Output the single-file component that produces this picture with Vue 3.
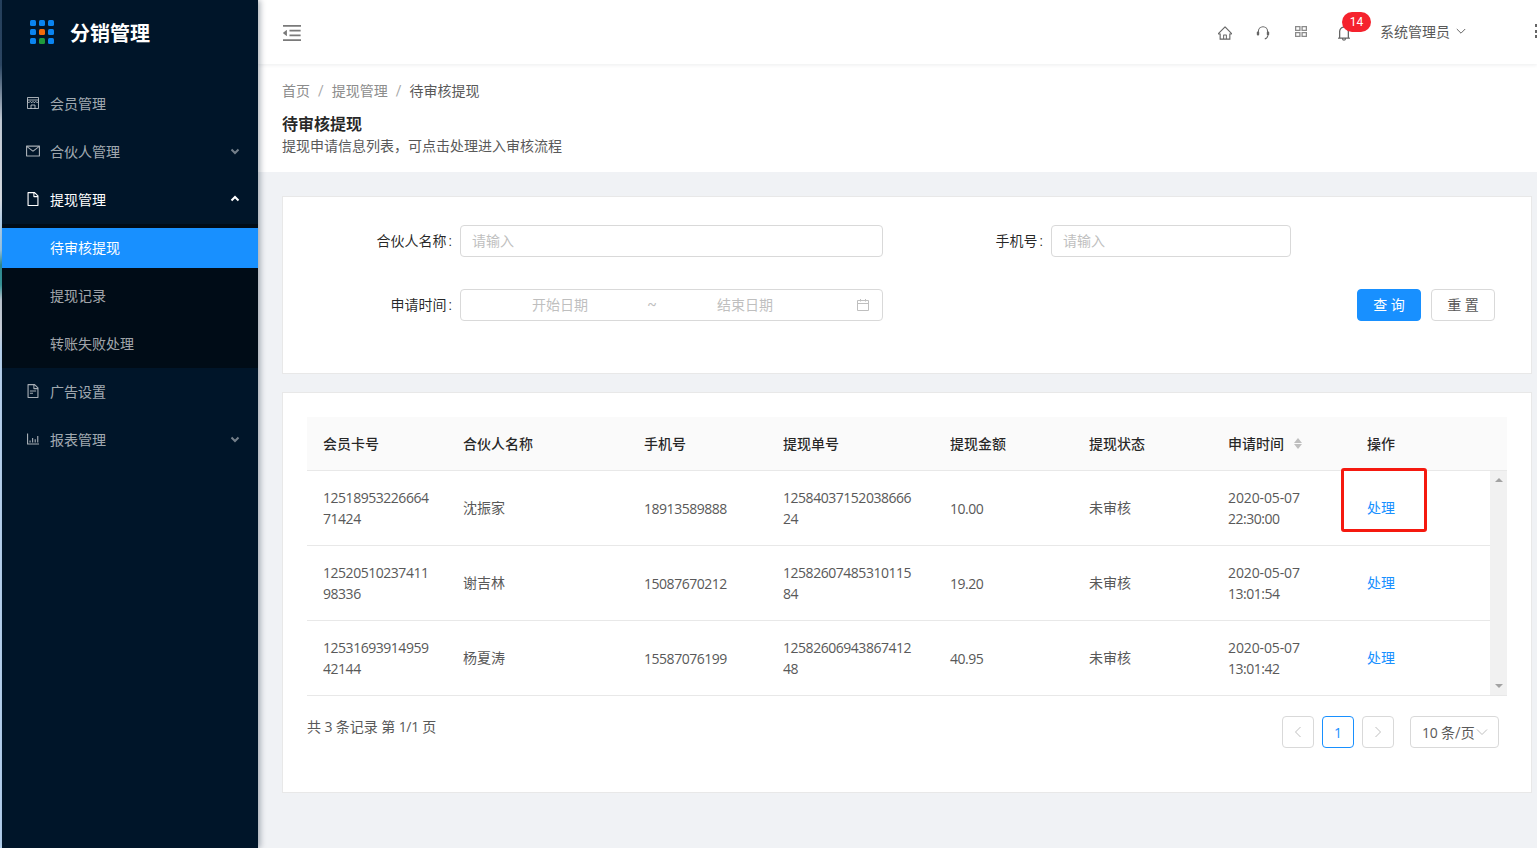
<script setup>
const subMenu = [
  { label: '待审核提现', active: true },
  { label: '提现记录' },
  { label: '转账失败处理' }
]

const rows = [
  { card: '1251895322666471424', name: '沈振家', phone: '18913589888', no: '1258403715203866624', amount: '10.00', status: '未审核', date: '2020-05-07', time: '22:30:00', marked: true },
  { card: '1252051023741198336', name: '谢吉林', phone: '15087670212', no: '1258260748531011584', amount: '19.20', status: '未审核', date: '2020-05-07', time: '13:01:54' },
  { card: '1253169391495942144', name: '杨夏涛', phone: '15587076199', no: '1258260694386741248', amount: '40.95', status: '未审核', date: '2020-05-07', time: '13:01:42' }
]

const columns = ['会员卡号', '合伙人名称', '手机号', '提现单号', '提现金额', '提现状态', '申请时间', '操作']
const logoDots = ['b', 'b', 'b', 'b', 'o', 'b', 'b', 'g', 'b']
</script>

<template>
  <div class="layout">
    <aside class="sider">
      <div class="logo">
        <div class="logo-mark">
          <i v-for="(d, i) in logoDots" :key="i" :class="['dot', d]"></i>
        </div>
        <span class="logo-text">分销管理</span>
      </div>

      <nav class="menu">
        <div class="menu-item">
          <svg class="mi" viewBox="0 0 14 14" fill="none" stroke="currentColor" stroke-width="1">
            <path d="M1.5 1.5h11v11h-11zM1.5 4h11M1.5 5.5c.8 1.3 2 1.3 2.8 0 .8 1.3 2 1.3 2.7 0 .8 1.3 2 1.3 2.7 0 .8 1.3 2 1.3 2.8 0M5 12.5V9h4v3.5" />
          </svg>
          <span>会员管理</span>
        </div>
        <div class="menu-item">
          <svg class="mi" viewBox="64 64 896 896" fill="currentColor"><path d="M928 160H96c-17.7 0-32 14.3-32 32v640c0 17.7 14.3 32 32 32h832c17.7 0 32-14.3 32-32V192c0-17.7-14.3-32-32-32zm-40 110.8V792H136V270.8l-27.6-21.5 39.3-50.5 42.8 33.3h643.1l42.8-33.3 39.3 50.5-27.7 21.5zM833.6 232L512 482 190.4 232l-42.8-33.3-39.3 50.5 27.6 21.5 341.6 265.6a55.99 55.99 0 0 0 68.7 0L888 270.8l27.6-21.5-39.3-50.5-42.7 33.2z" /></svg>
          <span>合伙人管理</span>
          <svg class="arrow" viewBox="0 0 10 10" fill="none" stroke="currentColor" stroke-width="2"><path d="M1.5 3.5 5 7l3.5-3.5" /></svg>
        </div>
        <div class="menu-item open">
          <svg class="mi" viewBox="64 64 896 896" fill="currentColor"><path d="M854.6 288.6L639.4 73.4c-6-6-14.1-9.4-22.6-9.4H192c-17.7 0-32 14.3-32 32v832c0 17.7 14.3 32 32 32h640c17.7 0 32-14.3 32-32V311.3c0-8.5-3.4-16.7-9.4-22.7zM790.2 326H602V137.8L790.2 326zm1.8 562H232V136h302v216a42 42 0 0 0 42 42h216v494z" /></svg>
          <span>提现管理</span>
          <svg class="arrow" viewBox="0 0 10 10" fill="none" stroke="currentColor" stroke-width="2"><path d="M1.5 6.5 5 3l3.5 3.5" /></svg>
        </div>
        <div class="submenu">
          <div v-for="s in subMenu" :key="s.label" :class="['sub-item', { active: s.active }]">{{ s.label }}</div>
        </div>
        <div class="menu-item">
          <svg class="mi" viewBox="64 64 896 896" fill="currentColor"><path d="M854.6 288.6L639.4 73.4c-6-6-14.1-9.4-22.6-9.4H192c-17.7 0-32 14.3-32 32v832c0 17.7 14.3 32 32 32h640c17.7 0 32-14.3 32-32V311.3c0-8.5-3.4-16.7-9.4-22.7zM790.2 326H602V137.8L790.2 326zm1.8 562H232V136h302v216a42 42 0 0 0 42 42h216v494zM504 618H320c-4.4 0-8 3.6-8 8v48c0 4.4 3.6 8 8 8h184c4.4 0 8-3.6 8-8v-48c0-4.4-3.6-8-8-8zM312 490v48c0 4.4 3.6 8 8 8h384c4.4 0 8-3.6 8-8v-48c0-4.4-3.6-8-8-8H320c-4.4 0-8 3.6-8 8z" /></svg>
          <span>广告设置</span>
        </div>
        <div class="menu-item">
          <svg class="mi" viewBox="64 64 896 896" fill="currentColor"><path d="M888 792H200V168c0-4.4-3.6-8-8-8h-56c-4.4 0-8 3.6-8 8v688c0 4.4 3.6 8 8 8h752c4.4 0 8-3.6 8-8v-56c0-4.4-3.6-8-8-8zM288 604h72v132h-72zM452 440h72v296h-72zM616 520h72v216h-72zM780 320h72v416h-72z" /></svg>
          <span>报表管理</span>
          <svg class="arrow" viewBox="0 0 10 10" fill="none" stroke="currentColor" stroke-width="2"><path d="M1.5 3.5 5 7l3.5-3.5" /></svg>
        </div>
      </nav>
    </aside>

    <div class="main">
      <header class="topbar">
        <svg class="fold" viewBox="112 160 800 704" fill="currentColor" preserveAspectRatio="none"><path d="M408 442h480c4.4 0 8-3.6 8-8v-56c0-4.4-3.6-8-8-8H408c-4.4 0-8 3.6-8 8v56c0 4.4 3.6 8 8 8zm-8 204c0 4.4 3.6 8 8 8h480c4.4 0 8-3.6 8-8v-56c0-4.4-3.6-8-8-8H408c-4.4 0-8 3.6-8 8v56zm504-486H120c-4.4 0-8 3.6-8 8v56c0 4.4 3.6 8 8 8h784c4.4 0 8-3.6 8-8v-56c0-4.4-3.6-8-8-8zm0 632H120c-4.4 0-8 3.6-8 8v56c0 4.4 3.6 8 8 8h784c4.4 0 8-3.6 8-8v-56c0-4.4-3.6-8-8-8zM115.4 518.9L271.7 642c5.8 4.6 14.4.5 14.4-6.9V388.9c0-7.4-8.5-11.5-14.4-6.9L115.4 505.1a8.74 8.74 0 0 0 0 13.8z" /></svg>
        <div class="top-right">
          <span class="tool">
            <svg viewBox="64 64 896 896" fill="currentColor"><path d="M946.5 505L560.1 118.8l-25.9-25.9a31.5 31.5 0 0 0-44.4 0L77.5 505a63.9 63.9 0 0 0-18.8 46c.4 35.2 29.7 63.3 64.9 63.3h42.5V940h691.8V614.3h43.4c17.1 0 33.2-6.7 45.3-18.8a63.6 63.6 0 0 0 18.7-45.3c0-17-6.7-33.1-18.8-45.2zM568 868H456V664h112v204zm217.9-325.7V868H632V640c0-22.1-17.9-40-40-40H432c-22.1 0-40 17.9-40 40v228H238.1V542.3h-96l370-369.7 23.1 23.1L882 542.3h-96.1z" /></svg>
          </span>
          <span class="tool">
            <svg viewBox="0 0 14 14" fill="none" stroke="currentColor" stroke-width="1.1"><path d="M2.4 6V5.4a4.6 4.6 0 0 1 9.2 0V6" /><path d="M11.8 9.5c-.2 1.8-1.2 3-3 3.4" /><rect x=".8" y="5.4" width="2.4" height="4.2" rx="1.1" fill="currentColor" stroke="none" /><rect x="10.8" y="5.4" width="2.4" height="4.2" rx="1.1" fill="currentColor" stroke="none" /></svg>
          </span>
          <span class="tool">
            <svg class="apps" viewBox="0 0 12 11" fill="none" stroke="currentColor" stroke-width="1.3"><path d="M.6.6h4.3v3.8H.6zM7.1.6h4.3v3.8H7.1zM.6 6.6h4.3v3.8H.6zM7.1 6.6h4.3v3.8H7.1z" /></svg>
          </span>
          <span class="tool bell">
            <svg viewBox="64 64 896 896" fill="currentColor"><path d="M816 768h-24V428c0-141.1-104.3-257.7-240-277.1V112c0-22.1-17.9-40-40-40s-40 17.9-40 40v38.9c-135.7 19.4-240 136-240 277.1v340h-24c-17.7 0-32 14.3-32 32v32c0 4.4 3.6 8 8 8h216c0 61.8 50.2 112 112 112s112-50.2 112-112h216c4.4 0 8-3.6 8-8v-32c0-17.7-14.3-32-32-32zM512 888c-26.5 0-48-21.5-48-48h96c0 26.5-21.5 48-48 48zM304 768V428c0-55.6 21.6-107.8 60.9-147.1S456.4 220 512 220c55.6 0 107.8 21.6 147.1 60.9S720 372.4 720 428v340H304z" /></svg>
            <b class="badge">14</b>
          </span>
          <span class="user">系统管理员</span>
          <svg class="user-arrow" viewBox="0 0 10 10" fill="none" stroke="currentColor" stroke-width="1"><path d="M.8 3 5 7.2 9.2 3" /></svg>
          <span class="more"><i></i><i></i><i></i></span>
        </div>
      </header>

      <section class="page-head">
        <div class="crumbs">
          <span class="crumb">首页</span><span class="sep">/</span>
          <span class="crumb">提现管理</span><span class="sep">/</span>
          <span class="crumb current">待审核提现</span>
        </div>
        <h1>待审核提现</h1>
        <p>提现申请信息列表，可点击处理进入审核流程</p>
      </section>

      <div class="content">
        <section class="card filter">
          <div class="form-row">
            <label class="lbl">合伙人名称<i class="colon">:</i></label>
            <input class="inp wide" placeholder="请输入" />
            <label class="lbl second">手机号<i class="colon">:</i></label>
            <input class="inp narrow" placeholder="请输入" />
          </div>
          <div class="form-row">
            <label class="lbl">申请时间<i class="colon">:</i></label>
            <div class="range">
              <span class="r-start">开始日期</span>
              <span class="r-sep">~</span>
              <span class="r-end">结束日期</span>
              <svg class="cal" viewBox="0 0 14 14" fill="none" stroke="currentColor" stroke-width="1"><path d="M1.5 2.5h11v10h-11zM1.5 5.5h11M4.5 1v2.5M9.5 1v2.5" /></svg>
            </div>
            <div class="actions">
              <button class="btn primary">查 询</button>
              <button class="btn">重 置</button>
            </div>
          </div>
        </section>

        <section class="card list">
          <div class="thead grid">
            <div v-for="c in columns" :key="c" class="th">
              {{ c }}
              <span v-if="c === '申请时间'" class="sort"><i class="up"></i><i class="down"></i></span>
            </div>
          </div>
          <div class="tbody">
            <div class="rows">
              <div v-for="r in rows" :key="r.no" class="tr grid">
                <div class="td num">{{ r.card }}</div>
                <div class="td">{{ r.name }}</div>
                <div class="td num">{{ r.phone }}</div>
                <div class="td num">{{ r.no }}</div>
                <div class="td num">{{ r.amount }}</div>
                <div class="td">{{ r.status }}</div>
                <div class="td num"><span class="date">{{ r.date }}</span><br />{{ r.time }}</div>
                <div class="td"><a class="link">处理</a><span v-if="r.marked" class="mark"></span></div>
              </div>
            </div>
            <div class="scroll">
              <i class="s-up"></i>
              <i class="s-down"></i>
            </div>
          </div>
          <div class="foot">
            <span class="total">共 <em>3</em> 条记录 第 <em>1/1</em> 页</span>
            <div class="pager">
              <span class="pg"><svg viewBox="0 0 12 12" fill="none" stroke="currentColor" stroke-width="1"><path d="M8.5 1 3.5 6l5 5" /></svg></span>
              <span class="pg on">1</span>
              <span class="pg"><svg viewBox="0 0 12 12" fill="none" stroke="currentColor" stroke-width="1"><path d="M3.5 1l5 5-5 5" /></svg></span>
              <span class="size"><em>10</em>&nbsp;条/页<svg viewBox="0 0 12 12" fill="none" stroke="currentColor" stroke-width="1"><path d="M1 3.5 6 8.5l5-5" /></svg></span>
            </div>
          </div>
        </section>
      </div>
    </div>
  </div>
</template>

<style>
html, body { margin: 0; background: #f0f2f5; overflow: hidden; }
</style>

<style scoped>
.layout {
  display: flex;
  width: 1537px;
  height: 848px;
  overflow: hidden;
  background: linear-gradient(180deg, #26425f 0, #2f4a66 65px, #c9d2dc 120px, #dfe4ea 200px, #b5d6f2 225px, #9cc8e4 250px, #2f8f96 265px, #3a9a9c 285px, #c2ccd6 300px, #d2d8e0 330px, #bcd8f4 350px, #b8d6f4 100%);
  font-family: Roboto, "Noto Sans CJK SC", sans-serif;
  font-size: 14px;
  color: #595959;
}
em { font-style: normal; font-family: "Open Sans", "Noto Sans CJK SC", sans-serif; font-size: 14px; letter-spacing: -.3px; }

/* Sidebar */
.sider {
  width: 256px;
  margin-left: 2px;
  flex: none;
  background: #001529;
  box-shadow: 2px 0 6px rgba(0, 21, 41, .35);
  position: relative;
  z-index: 2;
}
.logo {
  height: 64px;
  display: flex;
  align-items: center;
  padding-left: 28px;
}
.logo-mark {
  display: grid;
  grid-template-columns: repeat(3, 6px);
  grid-auto-rows: 6px;
  gap: 3px;
}
.dot { border-radius: 1.5px; background: #0a84f0; }
.dot.o { background: #f26a0b; }
.dot.g { background: #1f9a3c; }
.logo-text {
  margin-left: 16px;
  font-size: 20px;
  font-weight: 700;
  color: #fff;
}
.menu { padding-top: 19px; }
.menu-item {
  height: 40px;
  margin-bottom: 8px;
  display: flex;
  align-items: center;
  padding: 0 18px 0 24px;
  color: rgba(255, 255, 255, .65);
}
.menu-item.open { color: #fff; }
.mi { width: 14px; height: 14px; margin-right: 10px; flex: none; }
.arrow { width: 10px; height: 10px; margin-left: auto; opacity: .7; }
.open .arrow { opacity: 1; }
.submenu {
  background: #000c17;
  padding: 4px 0;
  margin-top: -3px;
  margin-bottom: 3px;
}
.sub-item {
  height: 40px;
  line-height: 40px;
  padding-left: 48px;
  margin-bottom: 8px;
  color: rgba(255, 255, 255, .65);
}
.sub-item:last-child { margin-bottom: 0; }
.sub-item.active { background: #1890ff; color: #fff; }

/* Main */
.main { flex: 1; min-width: 0; display: flex; flex-direction: column; background: #f0f2f5; }
.topbar {
  height: 64px;
  flex: none;
  background: #fff;
  box-shadow: 0 1px 4px rgba(0, 21, 41, .08);
  display: flex;
  align-items: center;
  padding-left: 25px;
  position: relative;
  z-index: 1;
}
.fold { width: 18px; height: 16px; color: #7a7a7a; margin-top: 1px; }
.top-right {
  margin-left: auto;
  display: flex;
  align-items: center;
  height: 100%;
  color: #666;
}
.tool {
  width: 38px;
  display: flex;
  justify-content: center;
  margin-top: 2px;
}
.tool svg { width: 14px; height: 14px; }
.tool svg.apps { width: 12px; height: 11px; margin-top: -3px; color: #8a8a8a; }
.bell { width: 48px; position: relative; }
.bell svg { width: 16px; height: 16px; }
.badge {
  position: absolute;
  left: 22px;
  top: -13px;
  min-width: 29px;
  height: 20px;
  line-height: 20px;
  border-radius: 10px;
  background: #f5222d;
  color: #fff;
  font-size: 12px;
  font-weight: 400;
  text-align: center;
}
.user { margin-left: 12px; margin-top: -2px; color: #595959; }
.user-arrow { width: 10px; height: 10px; margin-left: 6px; margin-top: -2px; }
.more {
  display: flex;
  flex-direction: column;
  gap: 2.5px;
  margin-left: 69px;
  margin-right: -1px;
  margin-top: -2px;
}
.more i { width: 3px; height: 3px; background: #666; }

.page-head {
  background: #fff;
  height: 108px;
  box-sizing: border-box;
  padding: 16px 24px 0;
  flex: none;
}
.crumbs { line-height: 22px; color: #8c8c8c; }
.sep { margin: 0 8px; color: #a6a6a6; }
.crumb.current { color: #595959; }
.page-head h1 {
  margin: 12px 0 0;
  font-size: 16px;
  line-height: 22px;
  font-weight: 700;
  color: rgba(0, 0, 0, .85);
}
.page-head p { margin: -1px 0 0; line-height: 22px; color: #595959; }

.content { padding: 24px 5px 0 24px; }
.card { background: #fff; border: 1px solid #e8e8e8; }

/* Filter */
.filter { padding: 28px 36px 52px 0; margin-bottom: 18px; }
.form-row { display: flex; align-items: center; height: 32px; }
.form-row + .form-row { margin-top: 32px; }
.lbl { width: 170px; margin-right: 7px; padding-bottom: 2px; text-align: right; color: rgba(0, 0, 0, .85); }
.lbl.second { width: 161px; }
.colon { font-style: normal; margin: 0 1px 0 2px; }
.inp {
  box-sizing: border-box;
  height: 32px;
  padding: 0 11px;
  border: 1px solid #d9d9d9;
  border-radius: 4px;
  outline: none;
  font: inherit;
  color: #595959;
  background: #fff;
}
.inp::placeholder { color: #bfbfbf; opacity: 1; }
.wide { width: 423px; }
.narrow { width: 240px; }
.range {
  box-sizing: border-box;
  width: 423px;
  height: 32px;
  border: 1px solid #d9d9d9;
  border-radius: 4px;
  display: flex;
  align-items: center;
  color: #bfbfbf;
  padding: 0 12px 2px 12px;
}
.r-start { width: 174px; text-align: center; }
.r-sep { width: 10px; text-align: center; }
.r-end { width: 176px; text-align: center; }
.cal { width: 14px; height: 14px; margin-left: auto; margin-top: 2px; }
.actions { margin-left: auto; display: flex; gap: 10px; }
.btn {
  width: 64px;
  height: 32px;
  border: 1px solid #d9d9d9;
  border-radius: 4px;
  background: #fff;
  font: inherit;
  color: #595959;
  padding: 0 0 2px;
}
.btn.primary { background: #1890ff; border-color: #1890ff; color: #fff; }

/* Table */
.list { padding: 24px 24px 0; height: 401px; box-sizing: border-box; }
.grid {
  display: grid;
  grid-template-columns: 140px 181px 139px 167px 139px 139px 139px 139px;
}
.thead {
  height: 53px;
  background: #fafafa;
  border-bottom: 1px solid #e8e8e8;
  align-items: center;
}
.th {
  padding: 0 0 2px 16px;
  font-weight: 500;
  color: rgba(0, 0, 0, .85);
  display: flex;
  align-items: center;
}
.sort { display: inline-flex; flex-direction: column; gap: 1px; margin-left: 10px; margin-top: 1px; }
.sort i { width: 0; height: 0; border-left: 4px solid transparent; border-right: 4px solid transparent; }
.sort .up { border-bottom: 5px solid #bfbfbf; }
.sort .down { border-top: 5px solid #bfbfbf; }
.tbody { display: flex; border-bottom: 1px solid #e8e8e8; }
.rows { flex: 1; min-width: 0; }
.tr { height: 75px; box-sizing: border-box; border-bottom: 1px solid #e8e8e8; }
.tr:last-child { height: 74px; border-bottom: 0; }
.td {
  padding: 0 16px;
  line-height: 21px;
  align-self: center;
  word-break: break-all;
  position: relative;
  color: #595959;
}
.num { font-family: "Open Sans", "Noto Sans CJK SC", sans-serif; letter-spacing: -.47px; }
.date { letter-spacing: -.12px; }
.link { color: #1890ff; }
.mark {
  position: absolute;
  left: -10px;
  top: -30px;
  width: 80px;
  height: 58px;
  border: 3px solid #f5190f;
  border-radius: 3px;
  pointer-events: none;
}
.scroll {
  width: 17px;
  flex: none;
  background: #f1f1f1;
  display: flex;
  flex-direction: column;
  justify-content: space-between;
  align-items: center;
  padding: 7px 0;
  box-sizing: border-box;
}
.s-up { width: 0; height: 0; border-left: 4px solid transparent; border-right: 4px solid transparent; border-bottom: 4px solid #a3a3a3; }
.s-down { width: 0; height: 0; border-left: 4px solid transparent; border-right: 4px solid transparent; border-top: 4px solid #a3a3a3; }

.foot {
  display: flex;
  justify-content: space-between;
  align-items: flex-start;
  padding: 20px 8px 0 0;
}
.total { line-height: 22px; }
.pager { display: flex; }
.pg {
  box-sizing: border-box;
  width: 32px;
  height: 32px;
  border: 1px solid #d9d9d9;
  border-radius: 4px;
  display: flex;
  align-items: center;
  justify-content: center;
  margin-right: 8px;
  color: #bfbfbf;
}
.pg svg { width: 12px; height: 12px; }
.pg.on { border-color: #1890ff; color: #1890ff; font-family: "Open Sans", sans-serif; }
.size {
  box-sizing: border-box;
  width: 89px;
  height: 32px;
  margin-left: 8px;
  padding-left: 11px;
  border: 1px solid #d9d9d9;
  border-radius: 4px;
  display: flex;
  align-items: center;
}
.size svg { width: 12px; height: 12px; color: #bfbfbf; margin-left: 1px; flex: none; }
</style>
